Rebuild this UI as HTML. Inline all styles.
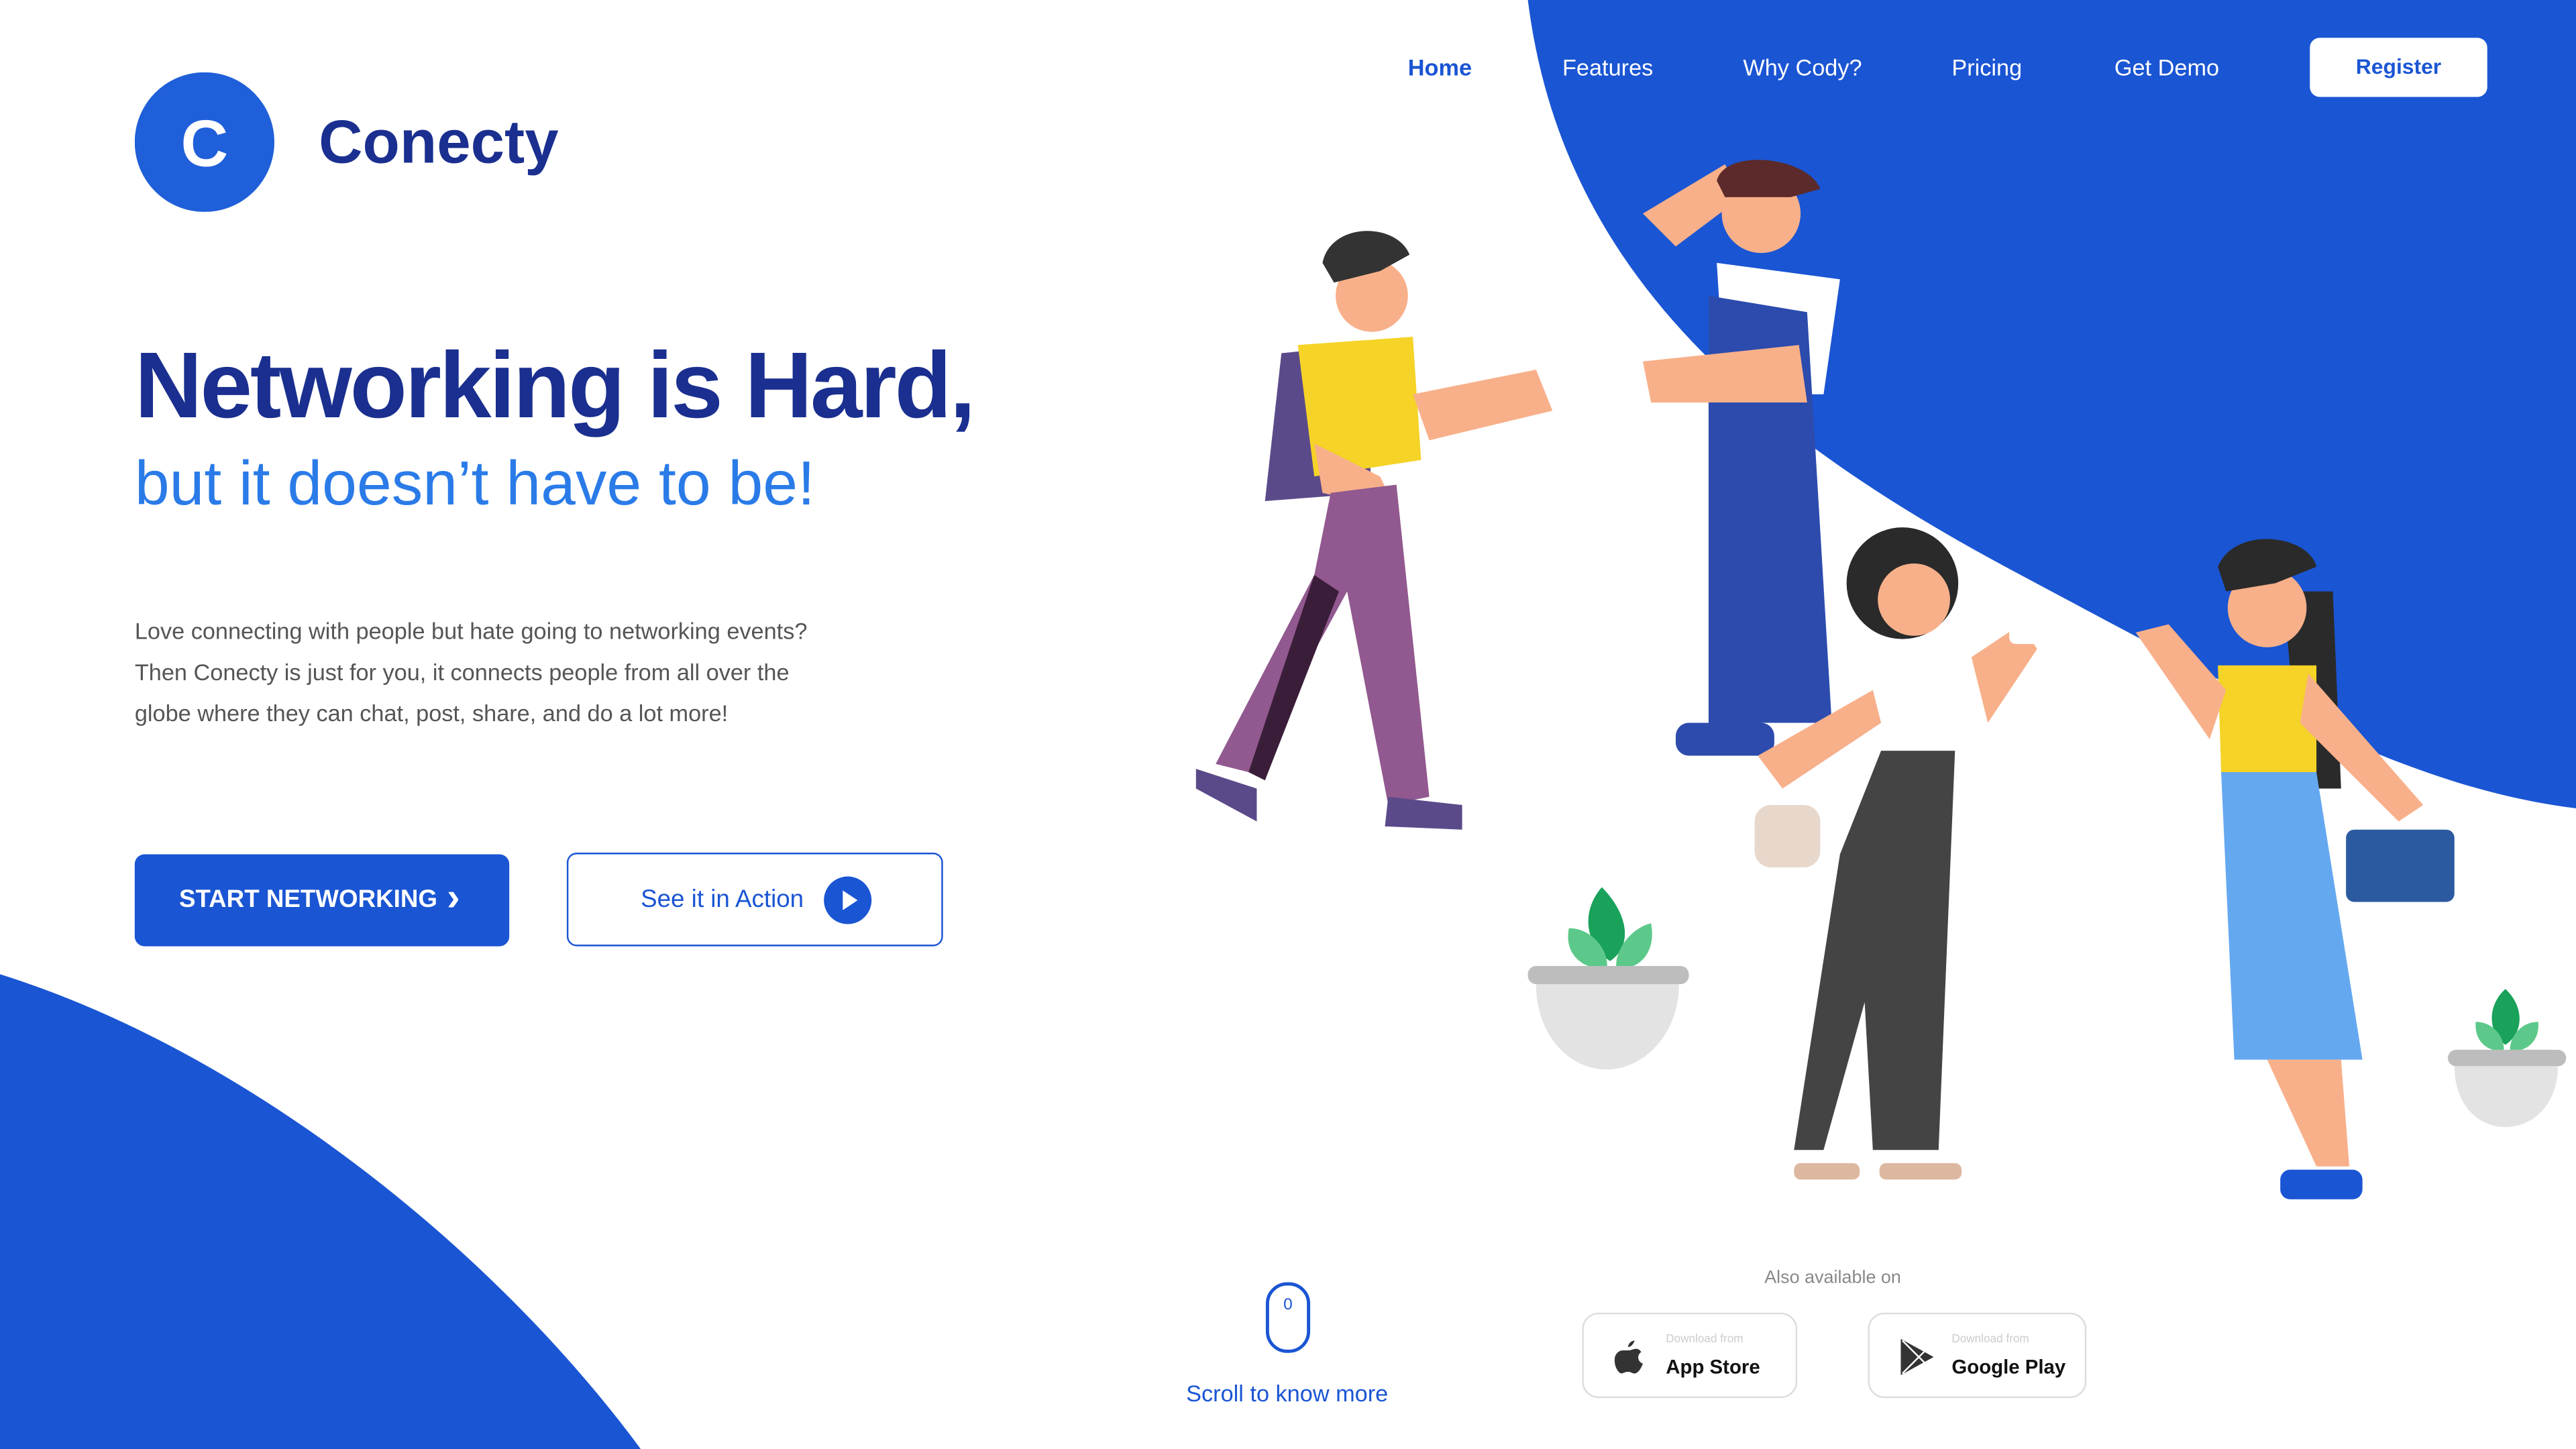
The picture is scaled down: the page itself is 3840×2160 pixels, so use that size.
<!DOCTYPE html>
<html><head><meta charset="utf-8"><style>
html,body{margin:0;padding:0;width:3840px;height:2160px;overflow:hidden;background:#fff}
#w{position:absolute;left:0;top:0;width:1568px;height:882px;transform:scale(2.44898);transform-origin:0 0;font-family:"Liberation Sans",sans-serif;}
.a{position:absolute}
.nav{position:absolute;top:33px;color:#fff;font-size:14px}
</style></head><body><div id="w">
<svg class="a" style="left:0;top:0" width="1568" height="882" viewBox="0 0 1568 882">
<path d="M930 0 C950 160 1060 260 1230 350 C1380 430 1470 480 1568 492 L1568 0 Z" fill="#1a55d3"/>
<path d="M0 593 C150 640 300 760 390 882 L0 882 Z" fill="#1a55d3"/>
<path d="M975 540 C990 555 995 575 980 585 C965 575 962 555 975 540Z" fill="#1aa15a"/>
<path d="M955 565 C970 565 980 580 978 590 C962 590 952 580 955 565Z" fill="#5cc98a"/>
<path d="M1005 562 C992 565 982 580 984 590 C1000 590 1008 578 1005 562Z" fill="#5cc98a"/>
<rect x="930" y="588" width="98" height="11" rx="5" fill="#bdbdbd"/>
<path d="M935 599 L1022 599 C1022 630 1000 651 978 651 C955 651 935 630 935 599Z" fill="#e3e3e3"/>
<path d="M1525 602 C1536 612 1537 628 1525 636 C1514 628 1514 612 1525 602Z" fill="#1aa15a"/>
<path d="M1507 622 C1518 622 1525 632 1524 640 C1512 640 1506 632 1507 622Z" fill="#5cc98a"/>
<path d="M1545 622 C1534 622 1527 632 1528 640 C1540 640 1546 632 1545 622Z" fill="#5cc98a"/>
<rect x="1490" y="639" width="72" height="10" rx="5" fill="#bdbdbd"/>
<path d="M1494 649 L1557 649 C1557 672 1542 686 1525 686 C1508 686 1494 672 1494 649Z" fill="#e3e3e3"/>
<path d="M780 215 L830 210 L835 300 L770 305 Z" fill="#5b4a8a"/>
<path d="M790 210 L860 205 L865 280 L800 290 Z" fill="#f5d327"/>
<path d="M860 240 L935 225 L945 250 L870 268 Z" fill="#f8b08a"/>
<path d="M800 270 L840 290 L850 310 L805 300 Z" fill="#f8b08a"/>
<path d="M810 300 L850 295 L870 485 L845 490 L820 360 L760 470 L740 465 L800 350 Z" fill="#91598f"/>
<path d="M760 470 L800 350 L815 360 L770 475Z" fill="#3a1d38"/>
<path d="M728 468 L765 480 L765 500 L728 480Z" fill="#5b4a8a"/>
<path d="M845 485 L890 490 L890 505 L843 503Z" fill="#5b4a8a"/>
<circle cx="835" cy="180" r="22" fill="#f8b08a"/>
<path d="M805 160 C810 135 850 135 858 155 L840 165 L812 172Z" fill="#333"/>
<path d="M1045 160 L1120 170 L1110 240 L1050 240Z" fill="#fff"/>
<path d="M1040 180 L1100 190 L1115 440 L1040 440Z" fill="#2c4bad"/>
<path d="M1000 220 L1095 210 L1100 245 L1005 245Z" fill="#f8b08a"/>
<path d="M1000 130 L1050 100 L1060 120 L1020 150Z" fill="#f8b08a"/>
<circle cx="1072" cy="130" r="24" fill="#f8b08a"/>
<path d="M1045 110 C1050 90 1100 95 1108 115 L1090 120 L1050 120Z" fill="#5c2a2a"/>
<rect x="1020" y="440" width="60" height="20" rx="8" fill="#2c4bad"/>
<circle cx="1158" cy="355" r="34" fill="#2a2a2a"/>
<circle cx="1165" cy="365" r="22" fill="#f8b08a"/>
<path d="M1135 405 L1200 405 L1198 440 L1140 440Z" fill="#fff"/>
<path d="M1145 457 L1190 457 L1180 700 L1140 700 L1135 610 L1110 700 L1092 700 L1120 520Z" fill="#444"/>
<path d="M1070 460 L1140 420 L1145 440 L1085 480Z" fill="#f8b08a"/>
<path d="M1200 400 L1230 380 L1240 395 L1210 440Z" fill="#f8b08a"/>
<rect x="1223" y="360" width="22" height="32" rx="4" fill="#fff"/>
<rect x="1068" y="490" width="40" height="38" rx="10" fill="#e8d8cc"/>
<rect x="1092" y="708" width="40" height="10" rx="4" fill="#ddb8a0"/>
<rect x="1144" y="708" width="50" height="10" rx="4" fill="#ddb8a0"/>
<path d="M1390 360 L1420 360 L1425 480 L1400 480Z" fill="#2a2a2a"/>
<circle cx="1380" cy="370" r="24" fill="#f8b08a"/>
<path d="M1350 345 C1360 320 1405 325 1410 345 L1385 355 L1355 360Z" fill="#2a2a2a"/>
<path d="M1350 405 L1410 405 L1410 470 L1352 470Z" fill="#f5d327"/>
<path d="M1352 470 L1410 470 L1438 645 L1360 645Z" fill="#64a8f0"/>
<path d="M1300 385 L1320 380 L1355 420 L1345 450Z" fill="#f8b08a"/>
<path d="M1405 410 L1475 490 L1460 500 L1400 440Z" fill="#f8b08a"/>
<path d="M1380 645 L1425 645 L1430 710 L1410 710Z" fill="#f8b08a"/>
<rect x="1388" y="712" width="50" height="18" rx="6" fill="#1a55d3"/>
<rect x="1428" y="505" width="66" height="44" rx="5" fill="#2c5aa0"/>
</svg>

<svg class="a" style="left:82px;top:44px" width="85" height="85"><circle cx="42.5" cy="42.5" r="42.5" fill="#1f5fd9"/><text x="42.5" y="57" text-anchor="middle" font-family="Liberation Sans" font-weight="bold" font-size="40" fill="#fff">C</text></svg>
<div class="a" style="left:194px;top:66px;font-size:37px;font-weight:bold;color:#1a2f8f">Conecty</div>

<div class="nav" style="left:857px;font-weight:bold;color:#1a55d3">Home</div>
<div class="nav" style="left:951px">Features</div>
<div class="nav" style="left:1061px">Why Cody?</div>
<div class="nav" style="left:1188px">Pricing</div>
<div class="nav" style="left:1287px">Get Demo</div>
<div class="a" style="left:1406px;top:23px;width:108px;height:36px;background:#fff;border-radius:6px;color:#1a55d3;font-size:13px;font-weight:bold;text-align:center;line-height:36px">Register</div>

<div class="a" style="left:82px;top:202px;font-size:57px;font-weight:bold;color:#1a2f8f;letter-spacing:-1.3px">Networking is Hard,</div>
<div class="a" style="left:82px;top:274px;font-size:38px;color:#2a7be8">but it doesn’t have to be!</div>
<div class="a" style="left:82px;top:372px;font-size:14px;line-height:25px;color:#555;width:430px">Love connecting with people but hate going to networking events? Then Conecty is just for you, it connects people from all over the globe where they can chat, post, share, and do a lot more!</div>

<div class="a" style="left:82px;top:520px;width:228px;height:56px;background:#1a55d3;border-radius:6px;color:#fff;font-size:15px;font-weight:bold;line-height:56px;padding-left:27px;box-sizing:border-box">START NETWORKING <span style="font-size:24px;position:absolute;left:190px;top:-1px">›</span></div>
<div class="a" style="left:345px;top:519px;width:229px;height:57px;border:1px solid #1a55d3;border-radius:6px;box-sizing:border-box;color:#1a55d3;font-size:15px;line-height:55px;padding-left:44px">See it in Action
<svg style="position:absolute;left:155px;top:13px" width="30" height="30"><circle cx="15" cy="15" r="14.5" fill="#1a55d3"/><path d="M12 9 L21 15 L12 21Z" fill="#fff"/></svg></div>

<svg class="a" style="left:770px;top:780px" width="28" height="44"><rect x="1.5" y="1.5" width="25" height="41" rx="12" fill="none" stroke="#1a55d3" stroke-width="2"/><text x="14" y="17" text-anchor="middle" font-size="10" fill="#1a55d3" font-family="Liberation Sans">0</text></svg>
<div class="a" style="left:722px;top:840px;font-size:14px;color:#1a55d3">Scroll to know more</div>

<div class="a" style="left:1074px;top:772px;font-size:11px;color:#888">Also available on</div>
<div class="a" style="left:963px;top:799px;width:131px;height:52px;border:1px solid #ddd;border-radius:10px;box-sizing:border-box">
<svg style="position:absolute;left:18px;top:14px" width="20" height="24"><path d="M13 2 C12 5 10 6 9 6 C9 4 11 2 13 2Z M9 8 C11 8 12 7 14 7 C16 7 17 9 17 9 C14 11 15 15 18 16 C17 19 15 22 13 22 C11 22 11 21 9 21 C7 21 6 22 5 22 C3 22 0 17 1 12 C2 9 4 8 6 8 C7 8 8 8 9 8Z" fill="#333"/></svg>
<div style="position:absolute;left:50px;top:12px;font-size:7px;color:#ccc">Download from</div>
<div style="position:absolute;left:50px;top:25px;font-size:12px;font-weight:bold;color:#111">App Store</div></div>
<div class="a" style="left:1137px;top:799px;width:133px;height:52px;border:1px solid #ddd;border-radius:10px;box-sizing:border-box">
<svg style="position:absolute;left:18px;top:14px" width="22" height="24"><path d="M1 1 L21 12 L1 23Z" fill="#333"/><path d="M2 2 L16 16 M2 22 L16 8" stroke="#fff" stroke-width="1"/></svg>
<div style="position:absolute;left:50px;top:12px;font-size:7px;color:#ccc">Download from</div>
<div style="position:absolute;left:50px;top:25px;font-size:12px;font-weight:bold;color:#111">Google Play</div></div>
</div></body></html>
